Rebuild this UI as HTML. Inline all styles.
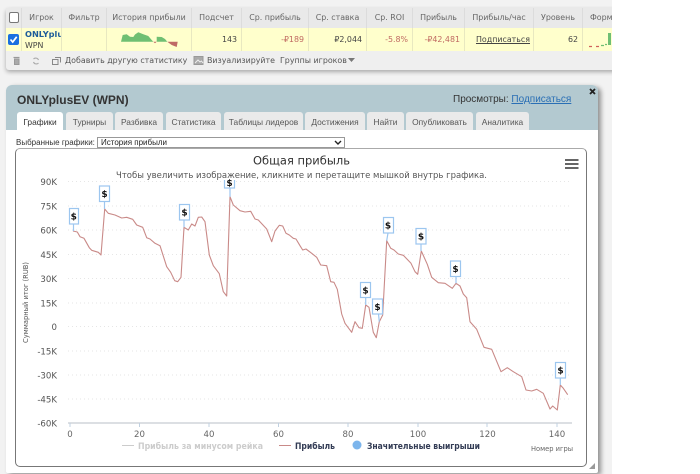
<!DOCTYPE html>
<html lang="ru"><head><meta charset="utf-8"><style>
html,body{margin:0;padding:0;width:700px;height:474px;overflow:hidden;background:#fff}
*{box-sizing:border-box}
#clip{position:absolute;left:0;top:0;width:612px;height:474px;overflow:hidden;background:#f2f2f2}
#wrap{position:absolute;left:0;top:0;width:612px;height:474px;background:#f2f2f2;overflow:hidden;filter:blur(.3px)}
.a{position:absolute;white-space:nowrap}
.d{font-family:"DejaVu Sans",sans-serif;font-size:7.9px;color:#555}
.h{top:8px;height:20px;line-height:20px;text-align:center;border-right:1px solid #dcdcdc;background:#e9e9e9;color:#666}
.c{top:28px;height:23px;line-height:23px;text-align:right;padding-right:4px;background:#ffffcc;border-right:1px solid #e8e8c0;color:#444}
.neg{color:#c06a62}
.t{top:112px;height:18px;line-height:20px;background:#eaeaea;border-radius:3px 3px 0 0;text-align:center;font-family:"Liberation Sans",sans-serif;font-size:8.4px;color:#555}
</style></head><body><div id="clip"><div id="wrap">

<div class="a" style="left:6px;top:8px;width:620px;height:62px;background:#efefef;border-radius:3px;box-shadow:0 2px 4px rgba(0,0,0,.3)"></div>
<div class="a d h" style="left:6px;width:16px"></div>
<div class="a" style="left:9px;top:12px;width:10px;height:11px;border:1px solid #777;border-radius:2px;background:#fff"></div>
<div class="a d h" style="left:22px;width:40px">Игрок</div>
<div class="a d h" style="left:62px;width:45px">Фильтр</div>
<div class="a d h" style="left:107px;width:85px">История прибыли</div>
<div class="a d h" style="left:192px;width:50px">Подсчет</div>
<div class="a d h" style="left:242px;width:67px">Ср. прибыль</div>
<div class="a d h" style="left:309px;width:58px">Ср. ставка</div>
<div class="a d h" style="left:367px;width:46px">Ср. ROI</div>
<div class="a d h" style="left:413px;width:52px">Прибыль</div>
<div class="a d h" style="left:465px;width:69px">Прибыль/час</div>
<div class="a d h" style="left:534px;width:49px">Уровень</div>
<div class="a d h" style="left:583px;width:29px;text-align:left;padding-left:7px;border:0;overflow:hidden">Форма</div>

<div class="a c" style="left:6px;width:16px"></div>
<div class="a" style="left:8px;top:34px;width:11px;height:11px;background:#1a6fe0;border-radius:2px"></div>
<svg class="a" style="left:8px;top:34px" width="11" height="11"><path d="M2.5 5.5 L4.7 8 L8.7 2.8" stroke="#fff" stroke-width="1.7" fill="none"/></svg>
<div class="a c" style="left:22px;width:40px"></div>
<div class="a d" style="left:25px;top:28px;width:36px;overflow:hidden;font-weight:bold;color:#1d5c9a;line-height:12px;font-size:8.2px">ONLYplusEV</div>
<div class="a d" style="left:25px;top:40px;line-height:11px;color:#444">WPN</div>
<div class="a c" style="left:62px;width:45px"></div>
<div class="a c" style="left:107px;width:85px"></div>
<svg class="a" style="left:107px;top:28px" width="84" height="23"><path d="M14 13.7 L15.7 7 L19.7 6.3 L23 8.7 L26.3 9 L28 6.5 L31.3 4.3 L36.3 6.3 L41.3 8 L44.7 12 L46.3 13.7 Z M49.7 13.7 L49.7 8.7 L54.7 9 L58 11 L60.3 13.7 Z" fill="#6fbf73"/><path d="M46.3 13.7 L48 15.3 L49.7 13.7 Z M60.3 13.7 L70.7 13.7 L69.7 19 L64.7 17 Z" fill="#bf6a66"/></svg>
<div class="a d c" style="left:192px;width:50px">143</div>
<div class="a d c neg" style="left:242px;width:67px">-₽189</div>
<div class="a d c" style="left:309px;width:58px">₽2,044</div>
<div class="a d c neg" style="left:367px;width:46px">-5.8%</div>
<div class="a d c neg" style="left:413px;width:52px">-₽42,481</div>
<div class="a d c" style="left:465px;width:69px;padding-right:3px;text-decoration:underline">Подписаться</div>
<div class="a d c" style="left:534px;width:49px">62</div>
<div class="a c" style="left:583px;width:29px;border:0;padding:0"></div>
<svg class="a" style="left:583px;top:28px" width="29" height="23"><path d="M6 18.5h3M13 18.5h3" stroke="#d0605c" stroke-width="1.2"/><path d="M18 17.5h3M22 16.5h2" stroke="#6fbf73" stroke-width="1.2"/><rect x="25" y="5" width="3" height="12" fill="#6fbf73"/></svg>

<svg class="a" style="left:10px;top:54px" width="32" height="14"><path d="M3.5 3.5h6" stroke="#999" stroke-width="1.2"/><path d="M4.5 5h4.5v5.5H4.5Z" fill="#aaa" stroke="#999"/><path d="M23.5 5a3 3 0 0 1 5 1M28.5 9a3 3 0 0 1-5-1" stroke="#aaa" stroke-width="1.1" fill="none"/></svg>
<svg class="a" style="left:51px;top:56px" width="11" height="10"><path d="M1.5 3.5h5.5v5h-5.5ZM4 1.5h5.5v5" stroke="#888" fill="none"/></svg>
<div class="a d" style="left:65px;top:54px;line-height:13px">Добавить другую статистику</div>
<svg class="a" style="left:193px;top:55px" width="12" height="11"><rect x="1" y="1.5" width="9" height="8" fill="#aaa" stroke="#999"/><path d="M2 8 L5 5 L7 7 L8.5 6 L10 8" stroke="#eee" fill="none"/></svg>
<div class="a d" style="left:207px;top:54px;line-height:13px">Визуализируйте</div>
<div class="a d" style="left:280px;top:54px;line-height:13px">Группы игроков</div>
<svg class="a" style="left:348px;top:58px" width="8" height="5"><path d="M0 0h7L3.5 4Z" fill="#777"/></svg>

<div class="a" style="left:6px;top:85px;width:592px;height:388px;background:#fff;border-radius:6px 6px 2px 2px;box-shadow:3px 2px 5px rgba(0,0,0,.4)"></div>
<div class="a" style="left:6px;top:85px;width:592px;height:45px;background:#b3c9d0;border-radius:6px 6px 0 0"></div>
<div class="a" style="left:17px;top:91px;font:bold 12px/18px 'Liberation Sans',sans-serif;color:#333">ONLYplusEV (WPN)</div>
<div class="a" style="left:453px;top:92px;font:10px/16px 'Liberation Sans',sans-serif;color:#333">Просмотры: <span style="color:#2a6fb5;text-decoration:underline">Подписаться</span></div>
<svg class="a" style="left:589px;top:88px" width="7" height="7"><path d="M1 1L6 6M6 1L1 6" stroke="#222" stroke-width="1.8"/></svg>
<div class="a t" style="left:17px;width:46px;background:#fff;color:#333">Графики</div>
<div class="a t" style="left:66px;width:47px">Турниры</div>
<div class="a t" style="left:115px;width:48px">Разбивка</div>
<div class="a t" style="left:166px;width:55px">Статистика</div>
<div class="a t" style="left:224px;width:79px">Таблицы лидеров</div>
<div class="a t" style="left:305px;width:60px">Достижения</div>
<div class="a t" style="left:367px;width:37px">Найти</div>
<div class="a t" style="left:406px;width:67px">Опубликовать</div>
<div class="a t" style="left:476px;width:53px">Аналитика</div>
<div class="a" style="left:16px;top:137px;font:8px/12px 'Liberation Sans',sans-serif;color:#333">Выбранные графики:</div>
<div class="a" style="left:97px;top:137px;width:248px;height:11px;border:1px solid #999;background:#fff;font:8px/10px 'Liberation Sans',sans-serif;color:#222;padding-left:3px">История прибыли</div>
<svg class="a" style="left:334px;top:140px" width="8" height="6"><path d="M1 1L4 4L7 1" stroke="#222" stroke-width="1.4" fill="none"/></svg>
<div class="a" style="left:15px;top:148px;width:572px;height:319px;border:1px solid #777;border-top-color:#aaa;border-radius:5px;background:#fff"></div>

<svg class="a" style="left:0;top:0" width="612" height="474" font-family="DejaVu Sans, sans-serif">
<g stroke="#e6e6e6" stroke-dasharray="1 3">
<path d="M68 181.5H572M68 206H572M68 230H572M68 254.5H572M68 278.5H572M68 303H572M68 326.5H572M68 351H572M68 375H572M68 399H572"/></g>
<path d="M68 423H572" stroke="#dcdfe3" stroke-width="2"/>
<path d="M70 423v4M139.5 423v4M209 423v4M278.5 423v4M348 423v4M418 423v4M487 423v4M557 423v4" stroke="#c0d0e0"/>
<g fill="#555" font-size="8.6" text-anchor="end">
<text x="57" y="185">90K</text><text x="57" y="209.5">75K</text><text x="57" y="233.5">60K</text><text x="57" y="258">45K</text><text x="57" y="282">30K</text><text x="57" y="306.5">15K</text><text x="57" y="330">0</text><text x="57" y="354.5">-15K</text><text x="57" y="378.5">-30K</text><text x="57" y="402.5">-45K</text><text x="57" y="426.5">-60K</text></g>
<text transform="translate(28 343) rotate(-90)" font-size="7" fill="#555" textLength="81" lengthAdjust="spacingAndGlyphs">Суммарный итог (RUB)</text>
<g fill="#666" font-size="8.6" text-anchor="middle">
<text x="70" y="437">0</text><text x="139.5" y="437">20</text><text x="209" y="437">40</text><text x="278.5" y="437">60</text><text x="348" y="437">80</text><text x="418" y="437">100</text><text x="487.5" y="437">120</text><text x="557" y="437">140</text></g>
<text x="531" y="451" font-size="7" fill="#666" textLength="42" lengthAdjust="spacingAndGlyphs">Номер игры</text>

<polyline fill="none" stroke="#c98a88" stroke-width="1.1" stroke-linejoin="round" points="73,231 77.3,232 80,236.7 84,238.3 89.3,247.7 91.7,250.3 98.3,252.3 101,255 104.7,209 108.3,213.3 115,215 121.7,218 126.7,217.3 132.7,219.3 136.7,225 142.7,227.3 146.7,237.7 150,239 155,243.3 160,245.7 166.7,266.7 170.7,272.3 174.7,280.7 177.7,281.7 181,277.3 184,227.3 188.3,230 191.7,224 195,226 198.3,217.3 201.7,217 205,221.7 209.3,255 213.3,265.7 219.3,273.7 223.3,291.7 226.7,296 230,196.7 233.3,205 240,210.7 245,212 250.7,211.3 255,219 258.3,220 266.7,229 271.7,241.7 275,231 279.3,225.3 282.7,226 286,233.3 289.3,235 293.3,238.3 296,239 300,245.7 302.7,250 306,249 311.7,253.3 316.7,257.3 320.7,265 326.7,265.7 330.7,281.7 334,282.3 337.3,289.3 341.7,314 345,323.3 351.7,332.3 355,321.7 359,327.7 362.3,328.3 365.7,305 369,307.3 372.3,326.7 373.3,332.3 376.3,337.7 379.3,321.7 382.7,315 386.7,240.7 390.7,248.3 394,250 398.3,254 403.3,255.3 411,263.3 415,271.7 417.7,274.3 421.3,251 427.3,264.3 431.7,277.3 438.3,282.7 445,283.3 452.3,288.3 456,283.3 460,286 463.3,294 466.7,297.7 470,321.7 476.7,329.3 484,347.3 491.7,349.3 501,371.7 507.3,367.7 513.3,371.7 521.7,376.7 526,390 531.7,391 536.7,389.3 543.3,393.3 550,409 552.7,406 557.3,410 560.3,385 563.3,388.3 567.7,394.7"/>

<g stroke="#9cc6ef" stroke-width="1.2" fill="#fff">
<path d="M73.5 224V231M104.5 201.5V209M184 220V227.3M230 188V196.7M388 233L386.7 240.7M421 244V251M456 276.5V283.3M365.7 297.5V305M378.5 314L379.3 321.7M560.3 378V385" fill="none"/>
<rect x="69.5" y="208.5" width="9" height="15.5"/><rect x="99.5" y="186" width="10" height="15.5"/><rect x="179.5" y="204.5" width="10" height="15.5"/><rect x="224.5" y="172" width="10" height="16"/><rect x="383.5" y="217.5" width="10" height="15.5"/><rect x="416" y="228.5" width="10" height="15.5"/><rect x="450.5" y="261" width="10" height="15.5"/><rect x="360.5" y="282.5" width="10" height="15"/><rect x="372.5" y="299" width="10" height="15"/><rect x="555.5" y="362.5" width="10" height="15.5"/>
</g>
<rect x="216" y="168" width="30" height="12" fill="#fff"/>
<g font-size="9" font-weight="bold" fill="#111" text-anchor="middle">
<text x="73.7" y="219.5">$</text><text x="104.5" y="197">$</text><text x="184.5" y="215.5">$</text><text x="229.5" y="186">$</text><text x="388" y="228.5">$</text><text x="421" y="239.5">$</text><text x="455.5" y="272">$</text><text x="365.5" y="293.5">$</text><text x="377.5" y="310">$</text><text x="560.5" y="373.5">$</text></g>

<text x="253" y="164.5" font-size="11.6" fill="#333" textLength="97" lengthAdjust="spacingAndGlyphs">Общая прибыль</text>
<text x="116" y="178" font-size="8.5" fill="#555" textLength="371" lengthAdjust="spacingAndGlyphs">Чтобы увеличить изображение, кликните и перетащите мышкой внутрь графика.</text>

<path d="M122 445.5H134" stroke="#ccc"/>
<text x="138" y="449" font-size="8.6" font-weight="bold" fill="#ccc" textLength="125" lengthAdjust="spacingAndGlyphs">Прибыль за минусом рейка</text>
<path d="M279 445.5H291" stroke="#c98a88"/>
<text x="295" y="449" font-size="8.6" font-weight="bold" fill="#333c55" textLength="40" lengthAdjust="spacingAndGlyphs">Прибыль</text>
<circle cx="357" cy="445" r="4.5" fill="#7cb5ec"/>
<text x="367" y="449" font-size="8.6" font-weight="bold" fill="#333c55" textLength="113" lengthAdjust="spacingAndGlyphs">Значительные выигрыши</text>
<path d="M565 160h13.5M565 164h13.5M565 168h13.5" stroke="#666" stroke-width="2"/>
<path d="M595 463L589 469H595Z" fill="#999"/>
</svg>
</div></div></body></html>
